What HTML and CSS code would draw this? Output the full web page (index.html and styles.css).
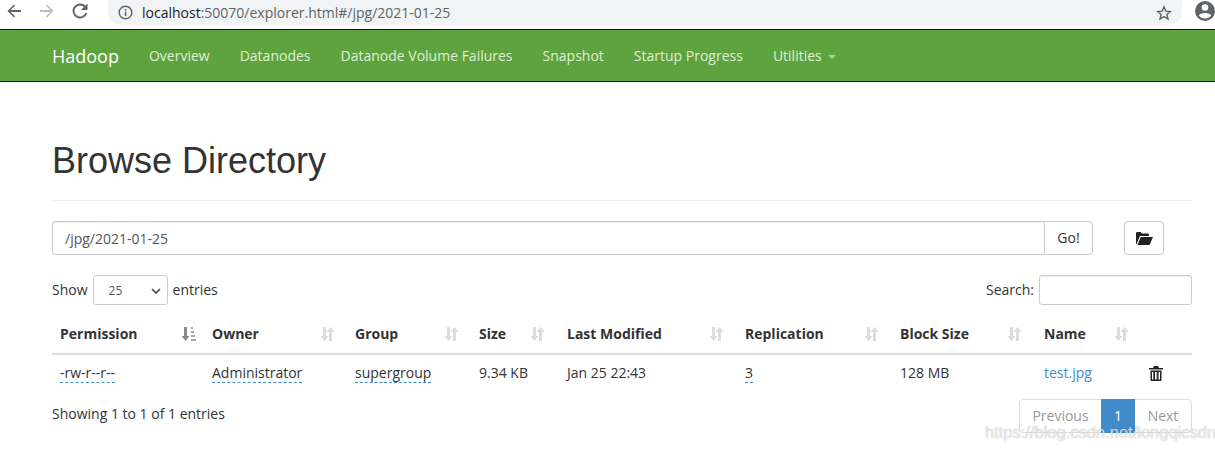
FILE: index.html
```html
<!DOCTYPE html>
<html lang="en">
<head>
<meta charset="utf-8">
<title>Browsing HDFS</title>
<link rel="stylesheet" href="styles.css">
</head>
<body>
<div class="chrome">
  <svg class="nav-ic" width="16" height="16" viewBox="0 0 16 16"><path d="M15 7H4.6l4.5-4.5L8 1.4 1.4 8 8 14.6l1.1-1.1L4.6 9H15z" fill="#5f6368"/></svg>
  <svg class="nav-ic" width="16" height="16" viewBox="0 0 16 16"><path d="M1 7h10.4L6.900 2.500 8 1.400 14.600 8 8 14.600l-1.100-1.100L11.400 9H1z" fill="#b9bbbe"/></svg>
  <svg class="nav-ic" width="16" height="16" viewBox="0 0 16 16"><path d="M13.400 2.600A7.500 7.500 0 1 0 15.300 10h-2a5.600 5.600 0 1 1-1.300-6L9 7h6.500V.5z" fill="#5f6368"/></svg>
  <div class="omnibox">
    <svg class="info" width="15" height="15" viewBox="0 0 15 15"><circle cx="7.500" cy="7.500" r="6.300" fill="none" stroke="#5f6368" stroke-width="1.400"/><rect x="6.800" y="6.500" width="1.500" height="4.500" fill="#5f6368"/><rect x="6.800" y="4" width="1.500" height="1.500" fill="#5f6368"/></svg>
    <span class="url"><span class="host">localhost</span>:50070/explorer.html#/jpg/2021-01-25</span>
    <svg class="star" width="16" height="16" viewBox="0 0 16 16"><path d="M8 1.800l1.800 4.300 4.600.4-3.500 3 1.100 4.500L8 11.600 4 14l1.100-4.500-3.500-3 4.600-.4z" fill="none" stroke="#5f6368" stroke-width="1.400"/></svg>
  </div>
  <svg class="avatar" width="20" height="20" viewBox="0 0 20 20"><path fill="#5f6368" d="M10 0a10 10 0 1 0 0 20 10 10 0 0 0 0-20zm0 3.200a3.300 3.300 0 1 1 0 6.600 3.300 3.300 0 0 1 0-6.600zm0 14.300a7.700 7.700 0 0 1-6.200-3.200c1.200-1.500 4-2.300 6.200-2.300s5 .8 6.200 2.300a7.700 7.700 0 0 1-6.200 3.200z"/></svg>
</div>

<nav class="navbar">
  <a class="brand" href="#">Hadoop</a>
  <ul class="nav-list">
    <li><a href="#">Overview</a></li>
    <li><a href="#">Datanodes</a></li>
    <li><a href="#">Datanode Volume Failures</a></li>
    <li><a href="#">Snapshot</a></li>
    <li><a href="#">Startup Progress</a></li>
    <li><a href="#">Utilities <span class="caret"></span></a></li>
  </ul>
</nav>

<main class="container">
  <header class="page-header"><h1>Browse Directory</h1></header>

  <div class="path-row">
    <div class="input-group">
      <input class="path-input" type="text" value="/jpg/2021-01-25">
      <button class="btn go-btn">Go!</button>
    </div>
    <button class="btn folder-btn" aria-label="Create directory">
      <svg width="18" height="14" viewBox="0 0 18 14"><path fill="#222" d="M1 13V2.500C1 1.700 1.600 1 2.400 1h3.200l1.400 1.500h5.600c.7 0 1.300.6 1.300 1.300V5H5L1.600 13zM5.800 6H18l-3.400 8H2.400z"/></svg>
    </button>
  </div>

  <div class="table-controls">
    <label class="length">Show <span class="fake-select">25<svg width="10" height="6" viewBox="0 0 10 6"><path d="M1 1l4 4 4-4" fill="none" stroke="#444" stroke-width="1.700"/></svg></span> entries</label>
    <label class="search">Search: <input class="search-input" type="search"></label>
  </div>

  <table class="files">
    <colgroup>
      <col class="c1"><col class="c2"><col class="c3"><col class="c4"><col class="c5"><col class="c6"><col class="c7"><col class="c8"><col class="c9">
    </colgroup>
    <thead>
      <tr>
        <th>Permission<svg class="sort active" width="15" height="16" viewBox="0 0 15 16"><path fill="#8a8a8a" d="M3 1h3v9h2.500L4.500 15 .5 10H3z"/><path fill="#a8a8a8" d="M10 1h2v2h-2zM10 5h3v2h-3zM10 9h4v2h-4zM10 13h5v2h-5z"/></svg></th>
        <th>Owner<svg class="sort" width="15" height="16" viewBox="0 0 15 16"><path fill="#dcdcdc" d="M3 1h3v9h2.500L4.500 15 .5 10H3zM12 15H9V6H6.500l4-5 4 5H12z"/></svg></th>
        <th>Group<svg class="sort" width="15" height="16" viewBox="0 0 15 16"><path fill="#dcdcdc" d="M3 1h3v9h2.500L4.500 15 .5 10H3zM12 15H9V6H6.500l4-5 4 5H12z"/></svg></th>
        <th>Size<svg class="sort" width="15" height="16" viewBox="0 0 15 16"><path fill="#dcdcdc" d="M3 1h3v9h2.500L4.500 15 .5 10H3zM12 15H9V6H6.500l4-5 4 5H12z"/></svg></th>
        <th>Last Modified<svg class="sort" width="15" height="16" viewBox="0 0 15 16"><path fill="#dcdcdc" d="M3 1h3v9h2.500L4.500 15 .5 10H3zM12 15H9V6H6.500l4-5 4 5H12z"/></svg></th>
        <th>Replication<svg class="sort" width="15" height="16" viewBox="0 0 15 16"><path fill="#dcdcdc" d="M3 1h3v9h2.500L4.500 15 .5 10H3zM12 15H9V6H6.500l4-5 4 5H12z"/></svg></th>
        <th>Block Size<svg class="sort" width="15" height="16" viewBox="0 0 15 16"><path fill="#dcdcdc" d="M3 1h3v9h2.500L4.500 15 .5 10H3zM12 15H9V6H6.500l4-5 4 5H12z"/></svg></th>
        <th>Name<svg class="sort" width="15" height="16" viewBox="0 0 15 16"><path fill="#dcdcdc" d="M3 1h3v9h2.500L4.500 15 .5 10H3zM12 15H9V6H6.500l4-5 4 5H12z"/></svg></th>
        <th></th>
      </tr>
    </thead>
    <tbody>
      <tr>
        <td><span class="dashed">-rw-r--r--</span></td>
        <td><span class="dashed">Administrator</span></td>
        <td><span class="dashed">supergroup</span></td>
        <td>9.34 KB</td>
        <td>Jan 25 22:43</td>
        <td><span class="dashed">3</span></td>
        <td>128 MB</td>
        <td><a class="link" href="#">test.jpg</a></td>
        <td class="trash-cell"><svg width="14" height="15" viewBox="0 0 14 15"><path fill="#222" d="M5 0h4l1 2h4v1.500H0V2h4zM1.500 4.500h11V14c0 .6-.4 1-1 1h-9c-.6 0-1-.4-1-1zM3 6v7.500h1.300V6zm3 0v7.500h1.700V6zm3.500 0v7.500H11V6z"/></svg></td>
      </tr>
    </tbody>
  </table>

  <div class="table-footer">
    <div class="info-text">Showing 1 to 1 of 1 entries</div>
    <div class="pagination">
      <a class="page disabled" href="#">Previous</a><a class="page current" href="#">1</a><a class="page disabled" href="#">Next</a>
    </div>
  </div>
</main>
<div class="watermark">https://blog.csdn.net/longqicsdn</div>
</body>
</html>
```
FILE: styles.css
```css
* { box-sizing: border-box; }
html, body { margin: 0; padding: 0; }
body {
  position: relative;
  height: 451px;
  overflow: hidden;
  background: #fff;
  color: #333;
  font-family: "Open Sans", "Noto Sans", sans-serif;
  font-size: 14px;
  line-height: 20px;
}
.chrome {
  height: 29px;
  display: flex;
  align-items: flex-start;
  background: #fff;
  padding-left: 6px;
}
.nav-ic { margin-top: 3px; margin-right: 17px; flex: none; }
.nav-ic:nth-child(3) { margin-right: 21px; }
.omnibox {
  width: 1075px;
  height: 25px;
  background: #f1f3f4;
  border-radius: 0 0 13px 13px;
  display: flex;
  align-items: center;
  padding: 0 10px;
  margin-left: -1px;
}
.info { margin-right: 9px; flex: none; }
.url { font-size: 14px; color: #5f6368; white-space: nowrap; }
.host { color: #202124; }
.star { margin-left: auto; margin-right: 0; }
.avatar { margin-left: 13px; margin-top: 1px; flex: none; }

.navbar {
  height: 53px;
  background: #5fa33e;
  border-top: 1px solid #101010;
  border-bottom: 1px solid #101010;
  display: flex;
  align-items: center;
  padding-left: 52px;
}
.brand { color: #fff; font-size: 18px; text-decoration: none; margin-right: 30px; }
.nav-list { list-style: none; margin: 0; padding: 0; display: flex; gap: 30px; }
.nav-list a { color: #dff0d8; text-decoration: none; white-space: nowrap; }
.caret {
  display: inline-block;
  width: 0; height: 0;
  margin-left: 3px;
  vertical-align: middle;
  border-top: 4px solid #a9cf98;
  border-left: 4px solid transparent;
  border-right: 4px solid transparent;
}

.container { padding: 0 23px 0 52px; }
.page-header { height: 119px; border-bottom: 1px solid #eee; padding-top: 59px; }
h1 {
  margin: 0;
  font-family: "Liberation Sans", Arial, sans-serif;
  font-weight: 400;
  font-size: 36px;
  line-height: 40px;
  color: #333;
}
.path-row { display: flex; margin-top: 20px; height: 34px; }
.input-group { display: flex; width: 1041px; }
.path-input {
  flex: 1;
  min-width: 0;
  height: 34px;
  border: 1px solid #ccc;
  border-right: 0;
  border-radius: 4px 0 0 4px;
  padding: 0 12px;
  font: inherit;
  color: #555;
  outline: 0;
  box-shadow: inset 0 1px 1px rgba(0,0,0,.075);
}
.btn {
  height: 34px;
  background: #fff;
  border: 1px solid #ccc;
  border-radius: 4px;
  font: inherit;
  color: #333;
  padding: 0;
}
.go-btn { width: 49px; border-radius: 0 4px 4px 0; }
.folder-btn { width: 40px; margin-left: 31px; display: flex; align-items: center; justify-content: center; }

.table-controls {
  display: flex;
  justify-content: space-between;
  align-items: center;
  margin-top: 20px;
  height: 30px;
}
.length, .search { display: flex; align-items: center; }
.fake-select {
  width: 75px;
  height: 30px;
  margin: 0 5px 0 5px;
  border: 1px solid #ccc;
  border-radius: 3px;
  font-size: 12px;
  color: #555;
  display: flex;
  align-items: center;
  justify-content: space-between;
  padding: 2px 6px 0 15px;
}
.search-input {
  width: 153px;
  height: 30px;
  margin-left: 5px;
  border: 1px solid #ccc;
  border-radius: 3px;
  outline: 0;
  padding: 0;
  background: #fff;
  appearance: none;
  box-shadow: inset 0 1px 1px rgba(0,0,0,.075);
}

.files { width: 1140px; border-collapse: collapse; table-layout: fixed; margin-top: 10px; }
.c1 { width: 152px; } .c2 { width: 143px; } .c3 { width: 124px; } .c4 { width: 88px; }
.c5 { width: 178px; } .c6 { width: 155px; } .c7 { width: 144px; } .c8 { width: 105px; } .c9 { width: 51px; }
.files th {
  position: relative;
  height: 39px;
  padding: 0 8px;
  text-align: left;
  font-weight: 700;
  white-space: nowrap;
  border-bottom: 2px solid #ddd;
}
.sort { position: absolute; right: 0; top: 11px; }
.files th:nth-child(1) .sort { right: 8px; }
.files th:nth-child(2) .sort, .files th:nth-child(3) .sort { right: 12px; }
.files th:nth-child(4) .sort { right: 14px; }
.files th:nth-child(5) .sort { right: 13px; }
.files th:nth-child(6) .sort { right: 13px; }
.files th:nth-child(7) .sort { right: 14px; }
.files th:nth-child(8) .sort { right: 12px; }
.files td { height: 37px; padding: 0 8px; white-space: nowrap; vertical-align: middle; }
.dashed { border-bottom: 1px dashed #428bca; }
.link { color: #428bca; text-decoration: none; }
.trash-cell svg { display: block; margin-left: 0; }

.table-footer { display: flex; justify-content: space-between; align-items: flex-start; margin-top: 8px; }
.info-text { margin-top: 5px; }
.pagination { display: flex; height: 34px; }
.page {
  display: flex;
  align-items: center;
  justify-content: center;
  border: 1px solid #ddd;
  margin-left: -1px;
  text-decoration: none;
}
.page:first-child { width: 83px; border-radius: 4px 0 0 4px; margin-left: 0; }
.page:last-child { width: 58px; border-radius: 0 4px 4px 0; }
.disabled { color: #999; background: #fff; }
.current { width: 34px; background: #428bca; border-color: #428bca; color: #fff; position: relative; }

.watermark {
  position: absolute;
  left: 985px;
  top: 422px;
  font-family: "Liberation Sans", Arial, sans-serif;
  font-size: 16.500px;
  line-height: 20px;
  white-space: nowrap;
  color: rgba(255,255,255,.75);
  text-shadow: 0 0 1px rgba(90,90,90,.55);
}
```
